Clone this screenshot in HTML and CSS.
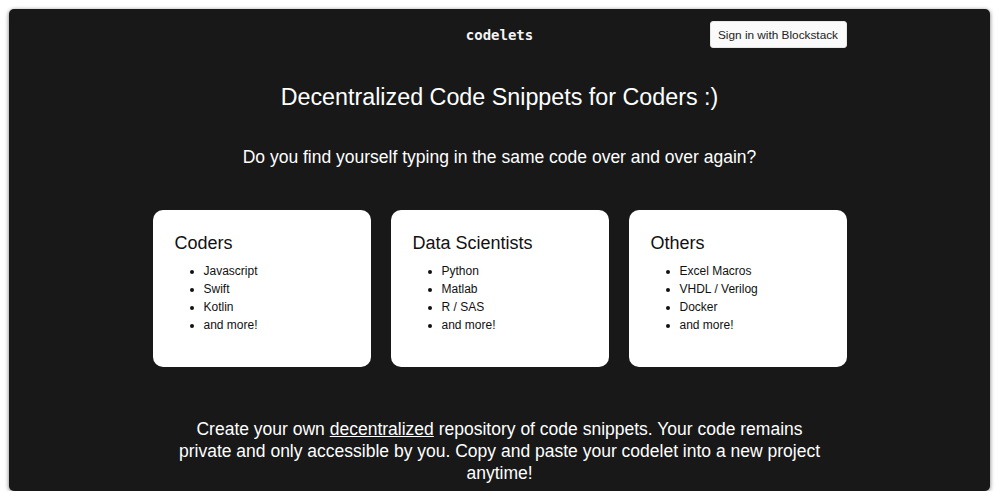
FILE: index.html
```html
<!DOCTYPE html>
<html lang="en">
<head>
<meta charset="utf-8">
<title>codelets</title>
<link rel="stylesheet" href="styles.css">
</head>
<body>
<div class="frame">
  <div class="container">
    <header class="header">
      <div class="brand">codelets</div>
      <button class="signin">Sign in with Blockstack</button>
    </header>
    <h1 class="title">Decentralized Code Snippets for Coders :)</h1>
    <p class="subtitle">Do you find yourself typing in the same code over and over again?</p>
    <div class="cards">
      <div class="card">
        <h2 class="card-title">Coders</h2>
        <ul class="card-list">
          <li>Javascript</li>
          <li>Swift</li>
          <li>Kotlin</li>
          <li>and more!</li>
        </ul>
      </div>
      <div class="card">
        <h2 class="card-title">Data Scientists</h2>
        <ul class="card-list">
          <li>Python</li>
          <li>Matlab</li>
          <li>R / SAS</li>
          <li>and more!</li>
        </ul>
      </div>
      <div class="card">
        <h2 class="card-title">Others</h2>
        <ul class="card-list">
          <li>Excel Macros</li>
          <li>VHDL / Verilog</li>
          <li>Docker</li>
          <li>and more!</li>
        </ul>
      </div>
    </div>
    <p class="blurb">Create your own <span class="under">decentralized</span> repository of code snippets. Your code remains private and only accessible by you. Copy and paste your codelet into a new project anytime!</p>
  </div>
</div>
</body>
</html>
```
FILE: styles.css
```css
html, body {
  margin: 0;
  padding: 0;
  background: #ffffff;
}
body {
  font-family: "Liberation Sans", Arial, sans-serif;
  overflow: hidden;
}
.frame {
  margin: 9px 10px 0 9px;
  height: 482px;
  background: #181818;
  border-radius: 5px;
  box-shadow: 0 1px 4px rgba(0,0,0,0.55);
  color: #ffffff;
  overflow: hidden;
}
.container {
  width: 694px;
  margin: 0 auto;
  display: flex;
  flex-direction: column;
  align-items: center;
}
.header {
  position: relative;
  width: 100%;
  height: 27px;
  margin-top: 12px;
  display: flex;
  align-items: center;
  justify-content: center;
}
.brand {
  font-family: "DejaVu Sans Mono", monospace;
  font-weight: bold;
  font-size: 14px;
  color: #f4f4f4;
}
.signin {
  position: absolute;
  right: 0;
  top: 0;
  height: 27px;
  width: 137px;
  padding: 0;
  background: #fafafa;
  color: #222;
  border: 1px solid #e6e6e6;
  border-radius: 3px;
  font-family: "Liberation Sans", Arial, sans-serif;
  font-size: 11.8px;
}
.title {
  margin: 35px 0 0;
  font-size: 23.3px;
  line-height: 28px;
  font-weight: normal;
}
.subtitle {
  margin: 35px 0 0;
  font-size: 17.5px;
  line-height: 22px;
}
.cards {
  margin-top: 42px;
  width: 100%;
  display: flex;
  gap: 20px;
}
.card {
  flex: 1;
  height: 157px;
  box-sizing: border-box;
  background: #ffffff;
  color: #111;
  border-radius: 10px;
  padding: 22px 22px 0;
}
.card-title {
  margin: 0;
  font-size: 18px;
  line-height: 22px;
  font-weight: normal;
}
.card-list {
  margin: 8px 0 0;
  padding-left: 29px;
  font-size: 12px;
  line-height: 18px;
}
.blurb {
  margin: 51px 0 0;
  max-width: 652px;
  text-align: center;
  font-size: 17.5px;
  line-height: 22px;
}
.under {
  text-decoration: underline;
}
```
